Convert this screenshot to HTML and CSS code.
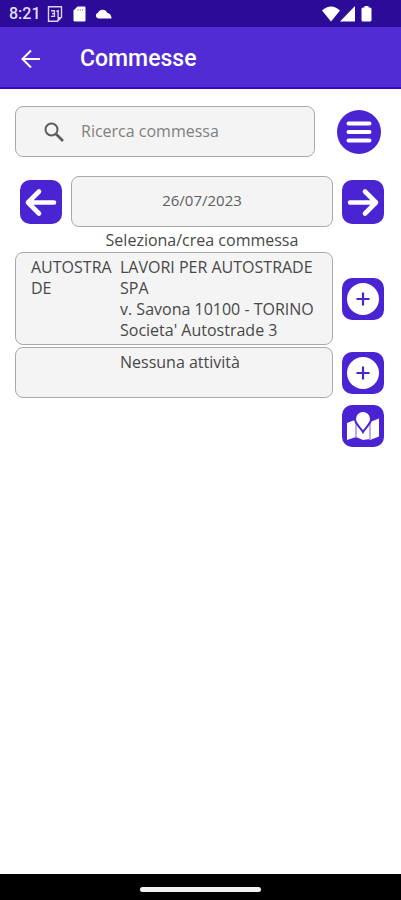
FILE: index.html
```html
<!DOCTYPE html>
<html lang="it">
<head>
    <meta charset="UTF-8">
    <meta name="viewport" content="width=device-width, initial-scale=1.0">
    <title>Commesse</title>
    <link rel="stylesheet" href="styles.css">
</head>
<body>
    <div class="status-bar">
        <span class="clock">8:21</span>
        <svg class="status-calendar" width="16" height="16" viewBox="0 0 16 16">
            <path d="M1.500 .8h13v10.400l-4 4h-9z" fill="none" stroke="#dcd3f7" stroke-width="1.400"/>
            <path d="M14.500 11h-4v4z" fill="#dcd3f7"/>
            <path d="M4 4.800h3.400v5.600H4M5 7.600h2.300M9.400 5.500l1.700-.7v6.200" fill="none" stroke="#dcd3f7" stroke-width="1.400"/>
        </svg>
        <svg class="status-card" width="13" height="16" viewBox="0 0 13 16">
            <path d="M4.500 .5h6.700q1.300 0 1.300 1.300v12.400q0 1.300-1.300 1.300H1.800q-1.300 0-1.300-1.300V4.500z" fill="#fff"/>
            <path d="M5 3v2M7.300 3v2M9.600 3v2" stroke="#a99bd8" stroke-width="1"/>
        </svg>
        <svg class="status-cloud" width="17" height="10" viewBox="0 0 17 10">
            <path d="M3.300 9.500a3 3 0 0 1-.3-5.800A5 5 0 0 1 12.200 3.800Q16.500 5 16.500 9.500z" fill="#fff"/>
        </svg>
        <span class="spacer"></span>
        <svg width="18" height="16" viewBox="0 0 18 16">
            <path d="M0 4.500Q9-3.500 18 4.500L9 15.500z" fill="#fff"/>
        </svg>
        <svg width="15" height="16" viewBox="0 0 15 16">
            <path d="M15 0v15.500H0z" fill="#fff"/>
        </svg>
        <svg class="status-battery" width="11" height="16" viewBox="0 0 11 16">
            <path d="M3.500 0h4v1.500h1.500q1.500 0 1.500 1.500v11q0 1.500-1.500 1.500H2Q.5 15.500.5 14V3Q.5 1.500 2 1.500h1.500z" fill="#fff"/>
        </svg>
    </div>

    <header class="app-bar">
        <button type="button" class="back" aria-label="Indietro">
            <svg width="20" height="20" viewBox="0 0 20 20">
                <path d="M19 10H2M10 1.500L1.500 10l8.500 8.500" fill="none" stroke="#fff" stroke-width="2"/>
            </svg>
        </button>
        <h1>Commesse</h1>
    </header>

    <main>
        <form class="search-row">
            <div class="box search">
                <svg width="20" height="20" viewBox="0 0 20 20">
                    <circle cx="7.500" cy="7.500" r="6" fill="none" stroke="#5c5c5c" stroke-width="2"/>
                    <path d="M12 12l7 7" stroke="#5c5c5c" stroke-width="2.600"/>
                </svg>
                <input type="text" placeholder="Ricerca commessa" aria-label="Ricerca commessa">
            </div>
            <button type="button" class="menu" aria-label="Menu">
                <svg width="44" height="44" viewBox="0 0 44 44">
                    <path d="M11.500 13.500h21M11.500 22h21M11.500 30.500h21" stroke="#fff" stroke-width="4" stroke-linecap="round"/>
                </svg>
            </button>
        </form>

        <div class="date-row">
            <button type="button" class="icon-btn arrow" aria-label="Giorno precedente">
                <svg width="42" height="44" viewBox="0 0 42 44">
                    <path d="M34 22.500H8M19 11.500L8 22.500l11 11" fill="none" stroke="#fff" stroke-width="4.600" stroke-linecap="round" stroke-linejoin="round"/>
                </svg>
            </button>
            <button type="button" class="box date">26/07/2023</button>
            <button type="button" class="icon-btn arrow" aria-label="Giorno successivo">
                <svg width="42" height="44" viewBox="0 0 42 44">
                    <path d="M8 22.500h26M23 11.500l11 11-11 11" fill="none" stroke="#fff" stroke-width="4.600" stroke-linecap="round" stroke-linejoin="round"/>
                </svg>
            </button>
            <p class="hint">Seleziona/crea commessa</p>
        </div>

        <div class="row">
            <div class="box card">
                <div class="code">AUTOSTRADE</div>
                <div class="details">
                    <p>LAVORI PER AUTOSTRADE SPA</p>
                    <p>v. Savona 10100 - TORINO</p>
                    <p>Societa' Autostrade 3</p>
                </div>
            </div>
            <button type="button" class="icon-btn" aria-label="Aggiungi commessa">
                <svg width="42" height="42" viewBox="0 0 42 42">
                    <circle cx="21" cy="21" r="16" fill="#fff"/>
                    <path d="M21 14.500v13M14.500 21h13" stroke="#4a24d2" stroke-width="2.200"/>
                </svg>
            </button>
        </div>

        <div class="row">
            <div class="box card">
                <div class="code"></div>
                <div class="details">
                    <p>Nessuna attività</p>
                </div>
            </div>
            <button type="button" class="icon-btn" aria-label="Aggiungi attività">
                <svg width="42" height="42" viewBox="0 0 42 42">
                    <circle cx="21" cy="21" r="16" fill="#fff"/>
                    <path d="M21 14.500v13M14.500 21h13" stroke="#4a24d2" stroke-width="2.200"/>
                </svg>
            </button>
        </div>

        <div class="map-row">
            <button type="button" class="icon-btn" aria-label="Mappa">
                <svg width="42" height="42" viewBox="0 0 42 42">
                    <path d="M5 18l9-3.500v17.500l-9 3zM14 14.500l7 2.500 7-1v18l-7 1-7-3zM28 17l9-3.500v18l-9 3.500z" fill="#fff"/>
                    <path d="M14 15v17.500M28 17v17.500" stroke="#b5a5ee" stroke-width="1.800"/>
                    <path d="M21 27c-2-4-8-8-8-13a8 8 0 0 1 16 0c0 5-6 9-8 13z" fill="#fff" stroke="#4a24d2" stroke-width="2"/>
                </svg>
            </button>
        </div>
    </main>

    <footer class="nav-bar">
        <span class="handle"></span>
    </footer>
</body>
</html>
```
FILE: styles.css
```css
* {
    box-sizing: border-box;
}

body {
    margin: 0;
    min-height: 100vh;
    display: flex;
    flex-direction: column;
    background: #fff;
    color: #484848;
    font-family: 'Open Sans', sans-serif;
    font-size: 16px;
    line-height: 21px;
}

p, h1 {
    margin: 0;
}

svg {
    display: block;
}

button {
    padding: 0;
    border: none;
    background: none;
    font: inherit;
    color: inherit;
    cursor: pointer;
}

.status-bar {
    display: flex;
    align-items: center;
    height: 27px;
    padding: 0 29px 0 9px;
    background: #2b0b98;
}

.clock {
    color: #e4ddfa;
    font-family: Roboto, sans-serif;
    font-size: 16px;
    font-weight: 500;
}

.status-calendar {
    margin-left: 6px;
}

.status-card {
    margin-left: 10px;
}

.status-cloud {
    margin-left: 9px;
}

.spacer {
    flex: 1;
}

.status-battery {
    margin-left: 6px;
}

.app-bar {
    display: flex;
    align-items: center;
    height: 62px;
    padding: 3px 21px 0;
    background: #512bd4;
    border-bottom: 2px solid #3a08c0;
}

.app-bar h1 {
    margin-left: 39px;
    color: #fff;
    font-family: Roboto, sans-serif;
    font-size: 23px;
    font-weight: 500;
    line-height: 26px;
}

main {
    flex: 1;
    padding: 17px 17px 0 15px;
}

.box {
    background: #f4f4f4;
    border: 1px solid #aaa;
    border-radius: 8px;
}

.search-row {
    display: flex;
    align-items: center;
    gap: 22px;
    padding-right: 3px;
}

.search {
    flex: 1;
    display: flex;
    align-items: center;
    gap: 17px;
    height: 51px;
    padding: 0 28px;
}

.search input {
    flex: 1;
    min-width: 0;
    padding: 0;
    border: none;
    outline: none;
    background: none;
    font: inherit;
    color: #484848;
}

.search input::placeholder {
    color: #808080;
    opacity: 1;
}

.menu {
    border-radius: 50%;
    background: #4a24d2;
}

.icon-btn {
    width: 42px;
    height: 42px;
    border-radius: 10px;
    background: #4a24d2;
}

.arrow {
    height: 44px;
}

.date-row {
    display: grid;
    grid-template-columns: 42px 1fr 42px;
    align-items: center;
    column-gap: 9px;
    margin-top: 19px;
    padding-left: 5px;
}

.date {
    height: 51px;
    padding-bottom: 2px;
    color: #606060;
    font-size: 15px;
}

.hint {
    grid-column: 2;
    margin: 3px 0 1px;
    text-align: center;
}

.row {
    display: flex;
    align-items: center;
    gap: 9px;
    margin-bottom: 2px;
}

.card {
    flex: 1;
    display: flex;
    gap: 8px;
    min-height: 51px;
    padding: 4px 15px 3px;
}

.code {
    width: 81px;
    overflow-wrap: anywhere;
}

.details {
    flex: 1;
}

.map-row {
    display: flex;
    justify-content: flex-end;
    padding-top: 5px;
}

.nav-bar {
    display: flex;
    align-items: center;
    justify-content: center;
    height: 26px;
    padding-top: 4px;
    background: #000;
}

.handle {
    width: 121px;
    height: 5px;
    border-radius: 3px;
    background: #f2f2f2;
}
```
